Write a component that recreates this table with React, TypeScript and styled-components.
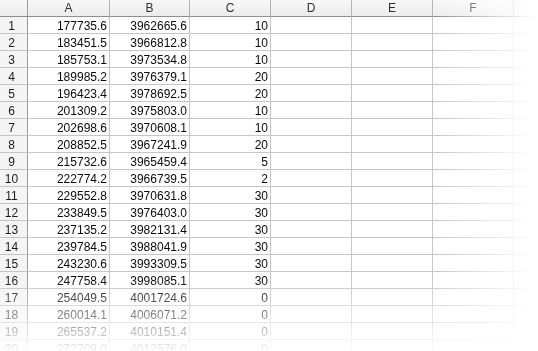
import React from "react";
import styled, { createGlobalStyle } from "styled-components";

const Global = createGlobalStyle`
  html, body { margin: 0; padding: 0; background: #ffffff; }
  body { width: 538px; height: 351px; overflow: hidden; font-family: "Liberation Sans", Arial, sans-serif; }
`;

const FadeX = styled.div`
  width: 538px;
  height: 351px;
  overflow: hidden;
  -webkit-mask-image: linear-gradient(to right, #000 435px, rgba(0,0,0,0) 536px);
  mask-image: linear-gradient(to right, #000 435px, rgba(0,0,0,0) 536px);
`;

const FadeY = styled.div`
  width: 538px;
  height: 351px;
  -webkit-mask-image: linear-gradient(to bottom, #000 278px, rgba(0,0,0,0.04) 351px);
  mask-image: linear-gradient(to bottom, #000 278px, rgba(0,0,0,0.04) 351px);
`;

const Sheet = styled.div`
  display: grid;
  grid-template-columns: 28px 82px 80px 81px 81px 81px 81px 81px;
  grid-auto-rows: 17px;
  width: max-content;
`;

const HeadBase = styled.div`
  box-sizing: border-box;
  background: linear-gradient(#f8f8f8, #ececec);
  color: #303030;
  font-size: 12px;
  display: flex;
  align-items: center;
`;

const Corner = styled(HeadBase)`
  border-right: 1px solid #9c9c9c;
  border-bottom: 1px solid #8f8f8f;
`;

const ColHead = styled(HeadBase)`
  justify-content: center;
  border-right: 1px solid #b4b4b4;
  border-bottom: 1px solid #8f8f8f;
  padding-bottom: 1px;
`;

const RowHead = styled(HeadBase)`
  background: #f4f4f4;
  border-right: 1px solid #9c9c9c;
  border-bottom: 1px solid #c4c4c4;
  justify-content: center;
  padding: 1px 4px 0 0;
  color: #1c1c1c;
`;

const Cell = styled.div<{ $right?: boolean }>`
  box-sizing: border-box;
  border-right: 1px solid #c6c6c6;
  border-bottom: 1px solid #c6c6c6;
  font-size: 12px;
  color: #0a0a0a;
  display: flex;
  align-items: center;
  justify-content: ${(p) => (p.$right ? "flex-end" : "flex-start")};
  padding: 1px 2px 0 2px;
  white-space: nowrap;
`;

const cols = ["A", "B", "C", "D", "E", "F", "G"];

const data: [string, string, string][] = [
  ["177735.6", "3962665.6", "10"],
  ["183451.5", "3966812.8", "10"],
  ["185753.1", "3973534.8", "10"],
  ["189985.2", "3976379.1", "20"],
  ["196423.4", "3978692.5", "20"],
  ["201309.2", "3975803.0", "10"],
  ["202698.6", "3970608.1", "10"],
  ["208852.5", "3967241.9", "20"],
  ["215732.6", "3965459.4", "5"],
  ["222774.2", "3966739.5", "2"],
  ["229552.8", "3970631.8", "30"],
  ["233849.5", "3976403.0", "30"],
  ["237135.2", "3982131.4", "30"],
  ["239784.5", "3988041.9", "30"],
  ["243230.6", "3993309.5", "30"],
  ["247758.4", "3998085.1", "30"],
  ["254049.5", "4001724.6", "0"],
  ["260014.1", "4006071.2", "0"],
  ["265537.2", "4010151.4", "0"],
  ["272709.0", "4012576.0", "0"],
];

export default function App() {
  return (
    <>
      <Global />
      <FadeX>
        <FadeY>
          <Sheet>
            <Corner />
            {cols.map((c) => (
              <ColHead key={c}>{c === "G" ? "" : c}</ColHead>
            ))}
            {data.map((row, i) => (
              <React.Fragment key={i}>
                <RowHead>{i + 1}</RowHead>
                {row.map((v, j) => (
                  <Cell key={j} $right>
                    {v}
                  </Cell>
                ))}
                <Cell />
                <Cell />
                <Cell />
                <Cell />
              </React.Fragment>
            ))}
          </Sheet>
        </FadeY>
      </FadeX>
    </>
  );
}
